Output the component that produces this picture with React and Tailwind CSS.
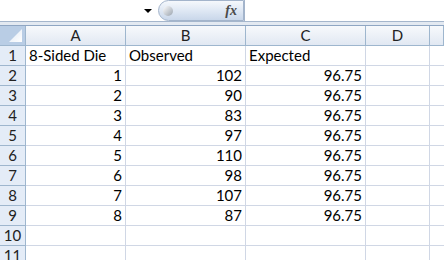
const rows = [
  ['8-Sided Die', 'Observed', 'Expected', ''],
  ['1', '102', '96.75', ''],
  ['2', '90', '96.75', ''],
  ['3', '83', '96.75', ''],
  ['4', '97', '96.75', ''],
  ['5', '110', '96.75', ''],
  ['6', '98', '96.75', ''],
  ['7', '107', '96.75', ''],
  ['8', '87', '96.75', ''],
  ['', '', '', ''],
  ['', '', '', ''],
];

const cols = ['A', 'B', 'C', 'D', ''];

const App = () => {
  return (
    <div className="w-[444px] h-[260px] overflow-hidden bg-white text-[15px] text-black font-['Lato','Open_Sans',sans-serif]">
      {/* formula bar */}
      <div className="flex h-[22px] border-b border-[#a5b6cc] bg-white">
        <div className="w-[158px] flex items-center justify-end pr-[6px]">
          <span className="w-0 h-0 border-l-[4px] border-r-[4px] border-t-[4px] border-l-transparent border-r-transparent border-t-black" />
        </div>
        <div className="w-[86px] h-[21px] rounded-l-full border border-[#a3b4cb] bg-gradient-to-b from-[#f5f8fc] via-[#dfe8f4] to-[#c9d7ea] flex items-center justify-between pl-[4px] pr-[6px]">
          <span className="w-[10px] h-[10px] rounded-full bg-gradient-to-br from-[#ffffff] to-[#9aa3ae]" />
          <span className="italic text-[14px] text-[#4a4a4a] font-bold font-['Liberation_Serif',serif]">
            fx
          </span>
        </div>
        <div className="flex-1 border-l border-[#a3b4cb]" />
      </div>
      {/* band */}
      <div className="h-[4px] bg-[#e3e9f1] border-b border-[#8fa6c3]" />

      {/* header row */}
      <div className="grid grid-cols-[26px_100px_120px_120px_64px_1fr] h-[20px]">
        <div className="relative bg-[#b9cde5] border-r border-b border-[#9eb6ce]">
          <div className="absolute right-[3px] bottom-[3px] w-[13px] h-[13px] bg-gradient-to-br from-[#dfe8f3] to-[#ffffff] [clip-path:polygon(100%_0,100%_100%,0_100%)]" />
        </div>
        {cols.map((c, i) => (
          <div
            key={i}
            className="flex items-center justify-center border-r border-b border-[#9eb6ce] bg-gradient-to-b from-[#f7f9fc] to-[#e1e8f2] text-[#222] leading-none"
          >
            {c}
          </div>
        ))}
      </div>

      {rows.map((r, ri) => (
        <div
          key={ri}
          className="grid grid-cols-[26px_100px_120px_120px_64px_1fr] h-[20px]"
        >
          <div className="flex items-center justify-center bg-[#e4ecf7] border-r border-b border-[#9eb6ce] text-[#222] leading-none">
            {ri + 1}
          </div>
          {r.map((v, ci) => (
            <div
              key={ci}
              className={`flex items-center px-[3px] border-r border-b border-[#d0d7e5] leading-none ${
                ri === 0 ? 'justify-start' : 'justify-end'
              }`}
            >
              {v}
            </div>
          ))}
          <div className="border-b border-[#d0d7e5]" />
        </div>
      ))}
    </div>
  );
};

export default App;
